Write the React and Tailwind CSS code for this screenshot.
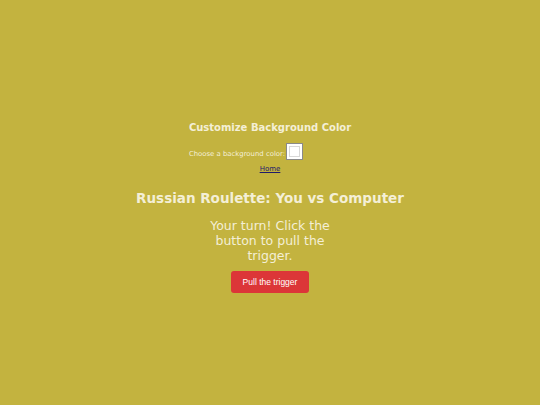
export default function App() {
  return (
    <div className="min-h-screen w-full bg-[#c3b33f] flex flex-col items-center justify-center pt-[10px] text-[#f4efd6] font-['DejaVu_Sans',sans-serif]">
      <div className="flex flex-col items-start">
        <h2 className="text-[10px] font-bold leading-[12px]">Customize Background Color</h2>
        <div className="flex items-end mt-[9px] text-[6.9px] leading-[9px]">
          <label className="mb-[1px]">Choose a background color:</label>
          <div className="ml-[1px] w-[17px] h-[17px] border border-[#8a8a8a] bg-white p-[2px]">
            <div className="w-full h-full bg-white border border-[#d8d8d8]"></div>
          </div>
        </div>
      </div>
      <a href="#" className="mt-[5px] text-[7px] leading-[9px] underline text-[#1f1b6b]">Home</a>
      <h1 className="mt-[16px] text-[13.5px] font-bold leading-[16px]">Russian Roulette: You vs Computer</h1>
      <p className="mt-[12px] w-[130px] text-center text-[12.5px] leading-[15px]">Your turn! Click the button to pull the trigger.</p>
      <button className="mt-[8px] w-[78px] h-[22px] rounded-[3px] bg-[#dc3638] text-white text-[8.5px] font-['Liberation_Sans',sans-serif]">Pull the trigger</button>
    </div>
  );
}
